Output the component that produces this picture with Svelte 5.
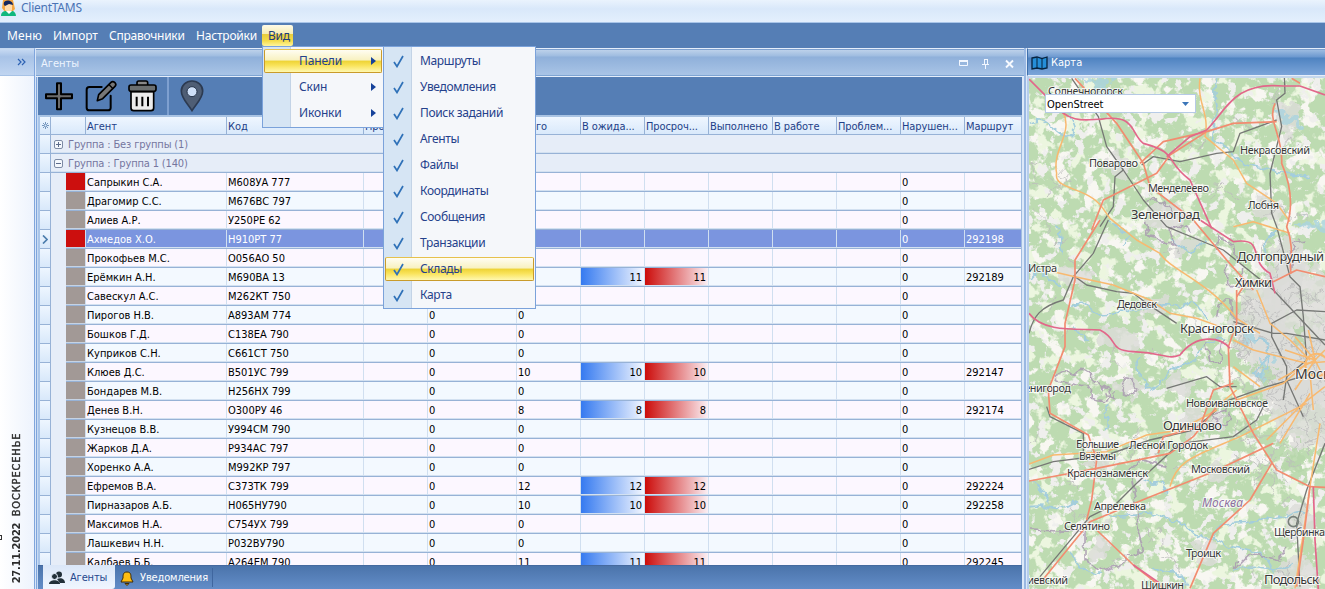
<script>
  const menus = ['Меню', 'Импорт', 'Справочники', 'Настройки'];
  const viewItems = ['Панели', 'Скин', 'Иконки'];
  const panels = ['Маршруты', 'Уведомления', 'Поиск заданий', 'Агенты', 'Файлы', 'Координаты', 'Сообщения', 'Транзакции', 'Склады', 'Карта'];
  const heads = ['Агент', 'Код', 'Про...', '', 'Всего', 'В ожида...', 'Просроч...', 'Выполнено', 'В работе', 'Проблем...', 'Нарушен...', 'Маршрут'];
  const rows = [
    ['Сапрыкин С.А.', 'М608УА 777', '', '', true],
    ['Драгомир С.С.', 'М676ВС 797', '', ''],
    ['Алиев А.Р.', 'У250РЕ 62', '', ''],
    ['Ахмедов Х.О.', 'Н910РТ 77', '', '292198', true, true],
    ['Прокофьев М.С.', 'О056АО 50', '', ''],
    ['Ерёмкин А.Н.', 'М690ВА 13', '', '292189', false, false, 11],
    ['Савескул А.С.', 'М262КТ 750', '', ''],
    ['Пирогов Н.В.', 'А893АМ 774', 0, ''],
    ['Бошков Г.Д.', 'С138ЕА 790', 0, ''],
    ['Куприков С.Н.', 'С661СТ 750', 0, ''],
    ['Клюев Д.С.', 'В501УС 799', 10, '292147'],
    ['Бондарев М.В.', 'Н256НХ 799', 0, ''],
    ['Денев В.Н.', 'О300РУ 46', 8, '292174'],
    ['Кузнецов В.В.', 'У994СМ 790', 0, ''],
    ['Жарков Д.А.', 'Р934АС 797', 0, ''],
    ['Хоренко А.А.', 'М992КР 797', 0, ''],
    ['Ефремов В.А.', 'С373ТК 799', 12, '292224'],
    ['Пирназаров А.Б.', 'Н065НУ790', 10, '292258'],
    ['Максимов Н.А.', 'С754УХ 799', 0, ''],
    ['Лашкевич Н.Н.', 'Р032ВУ790', 0, ''],
    ['Калбаев Б.Б.', 'А264ЕМ 790', 11, '292245']
  ];
  // label, x, baseline, width, size
  const places = [
    ['Солнечногорск', 1048, 95, 75, 11], ['Поварово', 1089, 167, 49, 11], ['Менделеево', 1148, 192, 61, 11],
    ['Некрасовский', 1240, 154, 70, 11], ['Лобня', 1248, 209, 31, 11], ['Зеленоград', 1131, 219, 69, 13],
    ['Долгопрудный', 1237, 261, 87, 13], ['Химки', 1235, 287, 37, 13], ['Истра', 1028, 272, 29, 11],
    ['Дедовск', 1117, 308, 40, 11], ['Красногорск', 1180, 333, 74, 13], ['Москва', 1295, 379, 51, 14],
    ['Звенигород', 1013, 392, 58, 11], ['Новоивановское', 1186, 407, 82, 11], ['Одинцово', 1163, 430, 59, 13],
    ['Большие', 1076, 448, 43, 11], ['Вязёмы', 1079, 460, 37, 11], ['Лесной Городок', 1129, 449, 79, 11],
    ['Краснознаменск', 1067, 477, 81, 11], ['Московский', 1191, 473, 59, 11], ['Апрелевка', 1094, 510, 52, 11],
    ['Селятино', 1064, 530, 46, 11], ['Щербинка', 1274, 536, 51, 11], ['Троицк', 1186, 557, 35, 11],
    ['Подольск', 1264, 584, 55, 13], ['Шишкин', 1141, 589, 43, 11], ['Киевский', 1021, 584, 47, 11]
  ];
  const orange = [
    'M540 115C530 190 570 220 555 290L640 360L680 430L770 490L810 545',
    'M130 218C160 280 95 330 110 400C100 450 200 440 245 500L270 535L350 600L420 640C450 690 560 720 650 835L720 880',
    'M100 695L165 710L280 735L390 780L450 820L530 835L600 860',
    'M640 900L700 930L860 970M640 560L700 545L810 580M710 750L750 850L810 900L870 960',
    'M27 1272L100 1245L260 1235L380 1185L480 1170L590 1110M450 1340C470 1260 520 1250 660 1190L860 1090',
    'M740 1200L850 1090L915 1040M780 1210L870 1060M650 1080L790 1030L860 970L915 965M825 1645L850 1480L870 1340L900 1150M640 980L720 1040M870 1000L880 1110M590 1100L650 1050'
  ];
  const red = [
    'M165 115L290 250L370 370L390 440L520 540L620 660L700 750',
    'M215 570L250 480L410 400L450 345L560 275M360 370L430 305L560 275L640 250L770 245',
    'M765 190C740 240 790 290 785 370C815 440 820 500 800 560C830 640 800 680 815 700M815 115L840 130',
    'M240 540L165 660L165 720L135 850L135 920L85 1050L90 1120L205 1185L230 1260L215 1380L200 1440',
    'M27 1323L230 1285L450 1240L520 1190L590 1100M415 1240L430 1190L540 1160L580 1050L640 1030',
    'M60 1630L210 1445L380 1375L580 1295L760 1210M230 1470L340 1575L430 1645M510 1645L580 1480L690 1380L755 1270M650 750L650 850L625 920L630 1040L700 1180L770 1290L870 1340L915 1342',
    'M870 1340L850 1500L830 1640M650 770L670 740L720 720L760 725L830 690L915 710'
  ];
  const pink = [
    'M27 117L100 190C150 260 220 235 240 238C350 220 330 280 370 310C480 340 430 360 510 420L575 565',
    'M440 350L510 290L560 270C620 210 640 125 790 138L840 138L915 165',
    'M540 540L640 605C740 590 680 660 750 700L765 760',
    'M27 820C70 880 180 865 240 870C300 900 260 930 340 935C440 940 440 960 480 945C530 880 600 890 630 925',
    'M880 1340L885 1500L895 1650M340 1575L420 1630'
  ];
  const rail = [
    'M155 115L235 230L260 320L310 390L370 480L440 560L610 630L760 750L915 915',
    'M793 110L795 160L770 180L785 260L750 400L755 520L770 560L810 710L840 740L850 830L860 960L800 1010L790 1080',
    'M310 390L285 410L280 500L240 560M265 540L220 640L160 710L130 780C60 800 40 830 27 880M165 710L200 735L290 755L340 760L380 790L470 850',
    'M365 375L400 350L480 365L590 340L640 335L660 280L770 240',
    'M27 1288L100 1265L260 1245L390 1200L520 1170L590 1110M60 1610L210 1430L290 1390L350 1330L480 1210L640 1190L710 1140L740 1080',
    'M915 815L830 810L755 850L755 890L800 980L800 1020L850 1130M915 1210L860 1350L830 1450L840 1640M600 1090L740 1040L880 1000M440 1045L560 1010L600 1040L650 1040M80 1100L90 1130L190 1180L190 1250M640 845L760 880L800 880L915 900'
  ];
  const rivers = [
    'M30 250C90 220 100 290 150 290C190 260 140 240 140 190M590 115C570 180 610 210 580 240C600 280 540 300 620 320C640 370 700 380 800 400L870 410',
    'M160 800C210 760 210 860 300 810C380 820 430 780 480 800C520 810 500 740 560 840M160 860L200 900M100 560C130 570 110 600 130 640M30 720C50 680 70 700 120 740',
    'M360 950C320 1000 390 1000 380 1050C450 1040 420 980 510 970C540 940 560 890 610 900',
    'M700 900C760 880 760 960 700 1000C760 1030 750 930 730 900M780 560L730 610L740 650',
    'M250 1170C290 1140 230 1110 270 1090M30 1400C110 1390 100 1430 170 1380M40 1320L90 1390M260 1420C300 1450 380 1390 450 1440C500 1440 510 1500 580 1490C600 1420 690 1470 730 1430C800 1460 800 1400 860 1420',
    'M370 1320C410 1340 430 1300 440 1360M580 1490C630 1550 720 1490 760 1600M150 1540C180 1570 170 1590 240 1600M400 1580C430 1620 480 1560 500 1640M640 1600C680 1550 760 1620 820 1570M270 540L330 590L310 620M450 600L520 640L560 600'
  ];
  const admin = [
    'M380 480L430 485L460 520M380 545L385 590L430 600L440 615L460 610L450 570L500 555L510 580M590 630L600 590L640 620L650 660M620 670L620 740L660 740L665 690M590 830L600 780L635 780L640 840M560 910L570 970L600 965L610 900M850 600L820 610L815 690',
    'M110 1020C100 980 170 990 160 1010C190 960 210 1010 230 1020C260 1060 230 1050 260 1040C290 1080 260 1090 215 1075C230 1030 160 1040 110 1020M310 1040C290 1010 330 1000 350 1040C350 1080 290 1060 310 1040M280 1060C300 1080 270 1090 260 1060',
    'M27 1470L195 1475L195 1560L245 1590L300 1575L320 1550L370 1530L350 1460L350 1400L330 1290L360 1260L440 1280M650 1560L640 1590L690 1540L780 1560L800 1520M630 1120L620 1160L590 1150L580 1120L620 1110'
  ];
  // Deterministic scatter of streets for the built-up areas
  let seed = 17;
  const rnd = () => ((seed = (seed * 16807) % 2147483647) / 2147483647);
  const streets = Array.from({ length: 170 }, (_, i) => {
    const city = i < 105;
    const x = city ? 640 + rnd() * 275 : 30 + rnd() * 850;
    const y = city ? 740 + rnd() * 560 : 130 + rnd() * 1480;
    const w = () => (rnd() - 0.5) * 95;
    return `M${x} ${y}l${w()} ${w()}l${w()} ${w()}`;
  });
  const urban = [[830, 900, 140, 230], [870, 1050, 130, 180], [720, 860, 80, 130], [800, 700, 60, 110], [440, 530, 70, 35], [290, 380, 35, 30], [800, 240, 35, 50], [740, 510, 50, 40], [540, 1150, 60, 40], [165, 710, 50, 25], [220, 1450, 40, 20], [230, 1270, 45, 25], [320, 1040, 50, 25], [840, 1600, 60, 55], [840, 1450, 40, 50], [560, 1530, 35, 35], [500, 610, 45, 30], [400, 800, 50, 25], [240, 1530, 28, 30], [600, 1300, 40, 25], [280, 900, 70, 40], [470, 1030, 40, 25]];
</script>

<div class="app">
  <div class="title">
    <svg width="16" height="17" viewBox="0 0 16 17"><path d="M2 0h10l2 9-3 3H4L1 8z" fill="#f5a742"/><path d="M4 3h7v7l-3 3-4-3z" fill="#ffdcae"/><path d="M3 5C1-1 12-1 12 5L8 4 4 6z" fill="#14275e"/><path d="M0 16c0-4 3-5 5-5l3 2 3-2c2 0 4 2 4 5z" fill="#10b87e"/><path d="M5 11h6l-3 3z" fill="#fff"/></svg>
    <span>ClientTAMS</span>
  </div>
  <nav>
    {#each menus as m, i}<span class="m m{i}">{m}</span>{/each}
    <span class="view">Вид
      <div class="pop pop1">
        {#each viewItems as v, i}
          <div class="item" class:hot={i === 0}><span>{v}</span><svg width="5" height="8" viewBox="0 0 5 8"><path d="M0 0l5 4-5 4z" fill="#16429a"/></svg></div>
        {/each}
      </div>
      <div class="pop pop2">
        {#each panels as p, i}
          <div class="item" class:hot={i === 8}><svg class="chk" width="12" height="13" viewBox="0 0 12 13"><path d="M1 7l3 4.500L10 1" fill="none" stroke="#2f71b8" stroke-width="1.700"/></svg><span>{p}</span></div>
        {/each}
      </div>
    </span>
  </nav>
  <main>
    <aside>
      <div class="railhead"><svg width="9" height="8" viewBox="0 0 9 8"><path d="M1 1l3 3-3 3M5 1l3 3-3 3" fill="none" stroke="#2d62b3" stroke-width="1.2"/></svg></div>
      <div class="date"><b>27.11.2022</b><b class="day">ВОСКРЕСЕНЬЕ</b></div>
      <i class="mark"></i>
    </aside>
    <section class="agents">
      <header class="cap"><span>Агенты</span>
        <svg width="56" height="11" viewBox="0 0 56 11"><path d="M.5 2.5h8v5h-8z" fill="none" stroke="#f2f7ff"/><path d="M0 2h9v2H0z" fill="#f2f7ff"/><path d="M25.500 1v5M28.500 1v5M25 1.500h4M23 6.500h7M26.500 7v4" stroke="#f2f7ff" fill="none"/><path d="M47 2.500l7 7M54 2.500l-7 7" stroke="#f7faff" stroke-width="1.900"/></svg>
      </header>
      <div class="tools">
        <svg class="t1" width="28" height="29" viewBox="135 245 84 87"><path d="M171 249h12v33h33v12h-33v33h-12v-33h-33v-12h33z" fill="#6c6c6c" stroke="#000" stroke-width="6" stroke-linejoin="round"/></svg>
        <svg class="t2" width="32" height="32" viewBox="255 241 96 96"><path d="M305 262H268q-8 0-8 8v54q0 8 8 8h56q8 0 8-8v-36" fill="none" stroke="#000" stroke-width="6" stroke-linecap="round"/><path d="M292 303l4-18 37-37q5-5 12 1 5 6 0 11l-37 37z" fill="#777" stroke="#000" stroke-width="5" stroke-linejoin="round"/><path d="M326 254l13 13" stroke="#000" stroke-width="4"/></svg>
        <svg class="t3" width="29" height="32" viewBox="386 241 87 96"><path d="M395 276h68v49q0 8-8 8h-52q-8 0-8-8z" fill="#ececec" stroke="#000" stroke-width="5"/><path d="M413 256v-7q0-5 5-5h22q5 0 5 5v7" fill="#888" stroke="#000" stroke-width="5"/><rect x="389" y="256" width="81" height="19" rx="6" fill="#6b6f70" stroke="#000" stroke-width="5"/><path d="M412 291v29M429 291v29M446 291v29" stroke="#000" stroke-width="6"/></svg>
        <i></i>
        <svg class="t4" width="24" height="32" viewBox="540 241 72 96"><path d="M576 333C560 308 544 295 544 274a32 30 0 0 1 64 0c0 21-16 34-32 59z" fill="#4f5e75" stroke="#2c3a51" stroke-width="5"/><circle cx="576" cy="276" r="15" fill="#cfe0f8" stroke="#27354b" stroke-width="3"/></svg>
      </div>
      <div class="grid">
        <div class="row head">
          <div class="ind"><svg width="7" height="7" viewBox="0 0 7 7"><path d="M3.500 0v7M0 3.500h7M1 1l5 5M6 1L1 6" stroke="#587fad" stroke-width=".8"/><circle cx="3.500" cy="3.500" r="1" fill="#dcebfc"/></svg></div><div class="blank"></div>
          {#each heads as h}<div class="c">{h}</div>{/each}
        </div>
        {#each ['Группа : Без группы (1)', 'Группа : Группа 1 (140)'] as g, i}
          <div class="group"><div class="ind"></div>
            <svg width="9" height="9" viewBox="0 0 9 9"><rect x=".5" y=".5" width="8" height="8" rx="1.500" fill="#f4f8fd" stroke="#7d8ba5"/><path d={i ? 'M2 4.500h5' : 'M2 4.500h5M4.500 2v5'} stroke="#5c6c8b"/></svg><span>{g}</span></div>
        {/each}
        {#each rows as r}
          {@const load = r[6] || r[2]}
          <div class="row" class:sel={r[5]}>
            <div class="ind">{#if r[5]}<svg width="6" height="9" viewBox="0 0 6 9"><path d="M1 .5l4 4-4 4" stroke="#4c7dad" stroke-width="1.700" fill="none"/></svg>{/if}</div>
            <div class="indent"></div><div class="sw" class:red={r[4]}></div>
            <div class="c">{r[0]}</div><div class="c">{r[1]}</div><div class="c"></div><div class="c">{r[2] === '' ? '' : 0}</div><div class="c">{r[2]}</div>
            {#if load}<div class="c bar blue">{load}</div><div class="c bar crim">{load}</div>{:else}<div class="c"></div><div class="c"></div>{/if}
            <div class="c"></div><div class="c"></div><div class="c"></div><div class="c">0</div><div class="c">{r[3]}</div>
          </div>
        {/each}
      </div>
      <footer>
        <div class="tab on"><svg width="16" height="14" viewBox="0 0 16 14"><circle cx="10" cy="3.500" r="3" fill="#223039"/><path d="M8 8c4-2 8 0 8 4h-5z" fill="#223039"/><circle cx="5.500" cy="5.500" r="3" fill="#223039" stroke="#e5eefb"/><path d="M0 13c0-5 11-5 11 0z" fill="#223039"/></svg><span>Агенты</span></div>
        <div class="tab"><svg width="14" height="15" viewBox="0 0 14 15"><path d="M7 1c-4 0-4 3-4 6l-2 4h12l-2-4c0-3 0-6-4-6z" fill="#ffbd10" stroke="#3d2b08"/><path d="M5 12.500h4l-2 2z" fill="#e7a313" stroke="#3d2b08"/></svg><span>Уведомления</span></div>
      </footer>
    </section>
    <section class="mapp">
      <header class="cap blue2"><svg width="17" height="14" viewBox="0 0 17 14"><path d="M1 2l5-1 5 1.500L16 1v11l-5 1-5-1-5 1z" fill="#258ed8" stroke="#06233f" stroke-width="1.300"/><path d="M6 1v11M11 2.500V13" stroke="#06233f"/></svg><span>Карта</span></header>
      <div class="map">
        <svg class="chart" width="296" height="511" viewBox="1029 78 296 511">
          <defs>
            <filter id="land" x="0" y="0" width="1" height="1"><feTurbulence type="fractalNoise" baseFrequency=".06" numOctaves="5" seed="8"/><feColorMatrix values="0 0 0 0 .937  0 0 0 0 .933  0 0 0 0 .886  12 0 0 0 -6.700"/></filter>
            <filter id="field" x="0" y="0" width="1" height="1"><feTurbulence type="fractalNoise" baseFrequency=".06" numOctaves="4" seed="31"/><feColorMatrix values="0 0 0 0 .84  0 0 0 0 .92  0 0 0 0 .74  0 12 0 0 -7"/></filter>
            <filter id="town" x="0" y="0" width="1" height="1"><feTurbulence type="fractalNoise" baseFrequency=".08" numOctaves="4" seed="5"/><feColorMatrix values="0 0 0 0 .86  0 0 0 0 .86  0 0 0 0 .85  0 0 14 0 -8.500"/></filter>
            <filter id="rough" x="-.2" y="-.2" width="1.4" height="1.4"><feTurbulence type="fractalNoise" baseFrequency=".07" numOctaves="3" seed="4"/><feDisplacementMap in="SourceGraphic" scale="28" xChannelSelector="R" yChannelSelector="G"/></filter>
            <filter id="wiggle"><feTurbulence type="fractalNoise" baseFrequency=".12" numOctaves="2" seed="9"/><feDisplacementMap in="SourceGraphic" scale="9" xChannelSelector="R" yChannelSelector="G"/></filter>
          </defs>
          <rect x="1029" y="78" width="296" height="511" fill="#bddbb1"/>
          <rect x="1029" y="78" width="296" height="511" filter="url(#land)"/>
          <rect x="1029" y="78" width="296" height="511" filter="url(#field)"/>
          <rect x="1029" y="78" width="296" height="511" filter="url(#town)"/>
          <g filter="url(#rough)"><g transform="translate(1020 40) scale(.33333)" fill="#dcdcd9" fill-opacity=".8">
            {#each urban as u}<ellipse cx={u[0]} cy={u[1]} rx={u[2]} ry={u[3]}/>{/each}
            <path d="M800 1210h40l10 90-60-20zM700 970l60 20-20 50zM820 850l40 30-20 50z" fill="#b5d6a9"/>
            <path d="M190 110l70 10 20 30-60 0zM770 210l90 50-10 15-80-40zM800 540l90 10 25-20v40l-50-8zM670 900l40 0-10 25-35-5zM720 950q40-10 20 50l-10 10z" fill="#a9d3df"/>
          </g></g>
          <g filter="url(#wiggle)"><g transform="translate(1020 40) scale(.33333)" fill="none">
            {#each streets as d}<path {d} stroke="#bdbdbd" stroke-width="2.400"/>{/each}
            {#each rivers as d}<path {d} stroke="#a3cddd" stroke-width="5"/>{/each}
            {#each admin as d}<path {d} stroke="#aa9bb2" stroke-width="5" opacity=".85"/>{/each}
          </g></g>
          <g transform="translate(1020 40) scale(.33333)" fill="none" stroke-linejoin="round">
            {#each rail as d}<path {d} stroke="#767875" stroke-width="4"/>{/each}
            {#each orange as d}<path {d} stroke="#f8b970" stroke-width="4.500"/>{/each}
            {#each red as d}<path {d} stroke="#f28c70" stroke-width="5"/>{/each}
            {#each pink as d}<path {d} stroke="#e2678a" stroke-width="5"/>{/each}
            <path d="M885 960l-60-70M885 960l-20-90M885 960l30-30M885 960l-90-30M885 960l-60 90M885 960l-110 60M885 960l30 60" stroke="#f8b970" stroke-width="4.500"/>
            <circle cx="890" cy="975" r="34" stroke="#f8b970" stroke-width="6"/>
            <circle cx="820" cy="1445" r="15" stroke="#77807a" stroke-width="5"/>
          </g>
          <g class="lab">
            {#each places as p}<text x={p[1]} y={p[2]} textLength={p[3]} font-size={p[4]}>{p[0]}</text>{/each}
            <text x="1202" y="507" textLength="41" font-size="12" class="region">Москва</text>
          </g>
        </svg>
        <div class="combo"><span>OpenStreet</span><svg width="7" height="4" viewBox="0 0 7 4"><path d="M0 0h7L3.500 4z" fill="#3b76b9"/></svg></div>
      </div>
    </section>
  </main>
</div>

<style>
  :global(body) { margin: 0; overflow: hidden; }
  .app { width: 1325px; height: 589px; display: flex; flex-direction: column; overflow: hidden; background: #557eb5; font: 12px/16px "Noto Sans", "Open Sans", sans-serif; box-sizing: border-box; }
  .app :global(*) { box-sizing: border-box; }
  svg { display: block; flex: none; }
  .title { height: 23px; display: flex; gap: 4px; padding: 0 0 0 1px; background: linear-gradient(#eaf3fd, #d9e8fa 40%, #e0edfc 80%, #e4effd); border-bottom: 1px solid #a9c5e8; color: #4a74b5; flex: none; }
  .title span { font-size: 12px; letter-spacing: -.25px; }
  nav { height: 25px; display: flex; padding: 2px 0 2px 7px; color: #fff; font-size: 12px; line-height: 21px; flex: none; }
  .m { white-space: nowrap; flex: none; }
  .m0 { width: 46px; letter-spacing: .1px; } .m1 { width: 56px; letter-spacing: -.1px; } .m2 { width: 87px; letter-spacing: -.25px; } .m3 { width: 66px; letter-spacing: -.2px; }
  .view { position: relative; width: 31px; height: 21px; padding-left: 6px; border-radius: 2px; color: #1e3c7d; letter-spacing: -.3px; background: linear-gradient(#fffbe8, #f7edb4 42%, #e9cd3c 45%, #f5dc4a 75%, #fff59d); }
  .pop { position: absolute; z-index: 5; background: linear-gradient(90deg, #d6e5f4 27px, #c3d3e6 27px, #c3d3e6 28px, #f5f7fa 28px); border: 1px solid #7ba2da; padding: 1px; font-size: 12px; letter-spacing: -.35px; color: #25418b; }
  .pop1 { left: 0; top: 21px; width: 122px; height: 82px; }
  .pop2 { left: 121px; top: 21px; width: 153px; height: 263px; }
  .item { height: 26px; display: flex; align-items: center; border: 1px solid transparent; line-height: 24px; }
  .pop1 .item { padding: 0 5px 0 34px; justify-content: space-between; }
  .pop1 { letter-spacing: -.15px; }
  .pop2 .item { padding-left: 7px; gap: 15px; }
  .pop2 .item span { white-space: nowrap; }
  .item.hot { height: 24px; margin: 1px 0; line-height: 22px; border: 1px solid #c99b2b; border-top-color: #e6c14c; border-radius: 2px; background: linear-gradient(#fffdf2, #f8f1c0 46%, #eed335 50%, #f9e35a 70%, #fff8b0); }
  main { flex: 1; display: flex; min-height: 0; }
  aside { position: relative; width: 35px; flex: none; border-right: 1px solid #7fa5dc; background: linear-gradient(90deg, #fff, #edf3fd); border-top: 1px solid #c6d8f0; }
  .railhead { height: 27px; padding: 9px 0 0 17px; background: linear-gradient(#c9dbf3, #a8c3e7 30%, #c0d5f1); border-bottom: 1px solid #a6c2e6; }
  .date { position: absolute; left: 9px; bottom: 6px; writing-mode: vertical-rl; transform: rotate(180deg); font: 11px/16px "DejaVu Sans Condensed", sans-serif; color: #2b2b2b; display: flex; gap: 6px; white-space: nowrap; }
  .date b { letter-spacing: -.2px; }
  .date .day { font-weight: normal; -webkit-text-stroke: .35px #2b2b2b; letter-spacing: .85px; }
  .mark { position: absolute; left: -3px; bottom: 49px; width: 5px; height: 5px; border: 1px solid #333; }
  .agents { width: 991px; flex: none; padding: 0 2px; border-left: 1px solid #d9e6f8; border-right: 2px solid #9ab8e2; background: linear-gradient(90deg, #7fa5dc 1px, #c8dbf4 1px, #c8dbf4 985px, #dce8f8 985px); display: flex; flex-direction: column; min-height: 0; }
  .cap { height: 29px; flex: none; margin: 0 -2px; border-top: 1px solid #e5eefb; border-bottom: 1px solid #e5eefb; background: linear-gradient(#7fa1cf 1px, #bdd1ea 1px, #9fbce0 7px, #8fb0da 8px, #a9c4e6 26px, #7fa5d3 26px); color: #eef5ff; display: flex; align-items: center; justify-content: space-between; padding: 2px 9px 0 5px; font: 11px/14px "DejaVu Sans Condensed", sans-serif; }
  .tools { height: 38px; flex: none; background: #557eb5; display: flex; padding: 3px 0 0 7px; }
  .t1 { margin: 2px 12px 0 0 } .t2 { margin: 0 11px 0 0 } .t3 { margin-right: 10px }
  .tools i { width: 2px; height: 38px; margin: -3px 11px 0 0; background: #7ea0d0; }
  .grid { flex: 1; min-height: 0; overflow: hidden; border-top: 2px solid #a9c3e3; border-left: 2px solid #a9c5e9; border-right: 1px solid #9fbce0; background: #e6edf8; font: 11px/19px "DejaVu Sans Condensed", sans-serif; letter-spacing: 0; color: #000; }
  .row { height: 19px; display: grid; grid-template-columns: 11px 15px 20px 141px 137px 64px 89px 64px 64px 64px 64px 64px 64px 64px 1fr; border-bottom: 1px solid #97b2d6; background: #f3f9ff; }
  .row:nth-child(even) { background: #fcf7ff; }
  .row > div { border-right: 1px solid #d0dff0; overflow: hidden; white-space: nowrap; }
  .c { height: 18px; padding-left: 1px; border-bottom: 1px solid #d3e1f1; }
  .row > .c:last-child { border-right: 0; }
  .row .ind, .group .ind { width: 11px; height: 18px; background: linear-gradient(#eef6ff, #d8e8fa); border-right: 1px solid #97b2d6; display: flex; align-items: center; justify-content: center; }
  .row > .indent { background: #e6edf8; border-right: 0; margin-bottom: -1px; }
  .row > .sw { background: #a29996; border-bottom: 1px solid #c6d3e4; }
  .row > .red { background: #cc0f0e; }
  .sel, .row.sel:nth-child(even), .row.sel:nth-child(odd) { background: #7b95df; color: #fff; }
  .row > .bar { text-align: right; padding-right: 2px; }
  .blue { background: linear-gradient(90deg, #357af0, #f3f7ff); }
  .crim { background: linear-gradient(90deg, #cc0c0a, #fbf0f5); }
  .row.head { height: 18px; background: linear-gradient(#eff6ff, #d9e9fb); color: #1e3f88; border-bottom-color: #97b2d6; letter-spacing: -.1px; }
  .head > .c { height: 17px; }
  .row.head > div { border-bottom: 0; border-right-color: #97b2d6; }
  .row.head > .ind { height: 17px; }
  .head > .blank { grid-column: span 2; }
  .group { height: 19px; display: flex; align-items: center; border-bottom: 1px solid #97b2d6; box-shadow: inset 0 -1px #d3e1f1; color: #75769f; letter-spacing: -.15px; }
  .group > svg { margin: 0 5px 0 3px; }
  footer { height: 24px; flex: none; background: linear-gradient(#4b74ab, #638dc8); display: flex; padding-left: 5px; border-top: 1px solid #45699f; font: 11px/22px "DejaVu Sans Condensed", sans-serif; color: #fff; }
  .tab { display: flex; align-items: center; gap: 6px; padding: 1px 4px 0 5px; border-right: 1px solid #3f669f; margin: 2px 0; height: 19px; letter-spacing: -.15px; }
  .tab.on { width: 72px; height: 24px; margin: -1px 0; padding: 2px 6px 0; gap: 5px; background: linear-gradient(#dbe7f8, #f0f6ff); color: #24478d; border: 0; border-radius: 0 0 3px 0; }
  .mapp { flex: 1; min-width: 0; display: flex; flex-direction: column; border-left: 1px solid #dce8f8; background: #b5cdec; padding-left: 2px; }
  .cap.blue2 { height: 28px; margin: 0 0 0 -2px; border-left: 1px solid #3f70ad; background: linear-gradient(#7fa1cf 1px, #9cbbe1 1px, #6c98cf 8px, #4f83c1 9px, #7ca5d9); color: #fff; justify-content: flex-start; gap: 3px; padding-left: 3px; }
  .map { position: relative; flex: 1; min-height: 0; border-top: 2px solid #c5d7ec; overflow: hidden; }
  .lab { font-family: "Noto Sans", sans-serif; fill: #373737; paint-order: stroke; stroke: #ffffffc0; stroke-width: 2px; }
  .region { font-style: italic; fill: #8d71a0; }
  .combo { position: absolute; left: 16px; top: 16px; width: 151px; height: 19px; border: 1px solid #b6cae6; background: #fff; display: flex; align-items: center; justify-content: space-between; padding: 1px 6px 0 1px; font: 11px/17px "DejaVu Sans Condensed", sans-serif; color: #000; }
</style>
